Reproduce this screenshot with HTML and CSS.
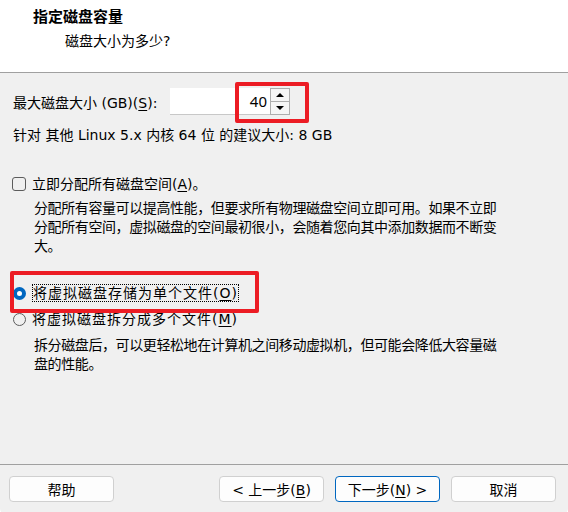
FILE: index.html
```html
<!DOCTYPE html>
<html lang="zh-CN">
<head>
  <meta charset="UTF-8" />
  <meta name="viewport" content="width=device-width, initial-scale=1.0">
  <title>新建虚拟机向导 - 指定磁盘容量</title>
  <link rel="stylesheet" href="styles.css">
</head>
<body>
  <div class="window">
    <!-- 顶部标题区 -->
    <header class="head">
      <div class="title">指定磁盘容量</div>
      <div class="subtitle">磁盘大小为多少?</div>
    </header>

    <main class="content">
      <div class="size-row">
        <label class="size-label">最大磁盘大小 (GB)(<u>S</u>):</label>
        <div class="spin">
          <div class="spin-field">40</div>
          <div class="spin-btns">
            <span class="spin-up"></span>
            <span class="spin-down"></span>
          </div>
        </div>
      </div>
      <p class="hint">针对 其他 Linux 5.x 内核 64 位 的建议大小: 8 GB</p>

      <label class="option">
        <span class="checkbox"></span>
        <span>立即分配所有磁盘空间(<u>A</u>)。</span>
      </label>
      <p class="desc">分配所有容量可以提高性能，但要求所有物理磁盘空间立即可用。如果不立即分配所有空间，虚拟磁盘的空间最初很小，会随着您向其中添加数据而不断变大。</p>

      <label class="option option-first">
        <span class="radio radio-on"></span>
        <span class="radio-text focus">将虚拟磁盘存储为单个文件(<u>O</u>)</span>
      </label>
      <label class="option option-second">
        <span class="radio"></span>
        <span class="radio-text">将虚拟磁盘拆分成多个文件(<u>M</u>)</span>
      </label>
      <p class="desc desc-split">拆分磁盘后，可以更轻松地在计算机之间移动虚拟机，但可能会降低大容量磁盘的性能。</p>

      <!-- 红框标注 -->
      <div class="mark mark-size"></div>
      <div class="mark mark-single"></div>
    </main>

    <footer class="foot">
      <button class="btn">帮助</button>
      <div class="foot-right">
        <button class="btn">&lt; 上一步(<u>B</u>)</button>
        <button class="btn btn-default">下一步(<u>N</u>) &gt;</button>
        <button class="btn">取消</button>
      </div>
    </footer>
  </div>
</body>
</html>
```

FILE: styles.css
```css
* {
  margin: 0;
  padding: 0;
  box-sizing: border-box;
}

body {
  width: 568px;
  height: 512px;
  overflow: hidden;
  background: #fff;
  font-family: "DejaVu Sans", "Noto Sans CJK SC", sans-serif;
  font-size: 14px;
  color: #000;
}

u {
  text-decoration: underline;
  text-underline-offset: 2px;
}

/* 窗口主体 */
.window {
  position: relative;
  height: 516px;
  display: flex;
  flex-direction: column;
  background: #f0f0f0;
  border-radius: 0 0 8px 8px;
}

/* 标题区 */
.head {
  height: 73px;
  background: #fff;
  border-bottom: 1px solid #a0a0a0;
  padding-top: 7px;
}

.title {
  padding-left: 33px;
  font-size: 15px;
  font-weight: bold;
  line-height: 20px;
}

.subtitle {
  padding-left: 65px;
  margin-top: 4px;
  line-height: 20px;
}

.content {
  flex: 1;
  padding-left: 13px;
}

/* 磁盘大小输入 */
.size-row {
  display: flex;
  align-items: center;
  height: 27px;
  margin-top: 15px;
}

.size-label {
  width: 157px;
}

.spin {
  display: flex;
  height: 27px;
}

.spin-field {
  width: 100px;
  background: #fff;
  border-bottom: 1px solid #c8c8c8;
  text-align: right;
  padding-right: 3px;
  font-family: "Noto Sans", sans-serif;
  font-size: 15px;
  line-height: 26px;
}

.spin-btns {
  width: 20px;
  display: flex;
  flex-direction: column;
  border: 1px solid #adadad;
  background: #f5f5f5;
}

.spin-up,
.spin-down {
  flex: 1;
  display: flex;
  align-items: center;
  justify-content: center;
}

.spin-up {
  border-bottom: 1px solid #adadad;
}

.spin-up::after,
.spin-down::after {
  content: "";
  border-left: 4px solid transparent;
  border-right: 4px solid transparent;
}

.spin-up::after {
  border-bottom: 4px solid #000;
}

.spin-down::after {
  border-top: 4px solid #000;
}

.hint {
  margin-top: 10px;
  line-height: 20px;
}

/* 复选框和单选框 */
.option {
  display: flex;
  align-items: center;
  margin-top: 29px;
  margin-left: -1px;
  line-height: 20px;
}

.option-first {
  margin-top: 29px;
}

.option-second {
  margin-top: 7px;
}

.checkbox {
  width: 14px;
  height: 14px;
  border: 1px solid #5c5c5c;
  border-radius: 3px;
  margin-right: 6px;
}

.radio {
  width: 13px;
  height: 13px;
  border: 1px solid #5c5c5c;
  border-radius: 50%;
  margin-right: 6px;
  margin-left: 1px;
}

.radio-on {
  border: 4px solid #0067c0;
  background: #fff;
}

.radio-text {
  letter-spacing: 1px;
}

.focus {
  outline: 1px dotted #000;
  outline-offset: -1px;
  padding: 0 1px;
  line-height: 18px;
}

/* 说明文字，每行 33 个字 */
.desc {
  width: 493px;
  padding-left: 21px;
  margin-top: 4px;
  line-height: 19px;
  font-family: "Noto Sans CJK SC", sans-serif;
  letter-spacing: -0.4px;
}

.desc-split {
  margin-top: 6px;
}

/* 红框标注 */
.mark {
  position: absolute;
  border: 4px solid #ec1c24;
  border-radius: 2px;
}

.mark-size {
  left: 235px;
  top: 82px;
  width: 74px;
  height: 41px;
}

.mark-single {
  left: 10px;
  top: 271px;
  width: 249px;
  height: 42px;
}

/* 底部按钮 */
.foot {
  height: 52px;
  border-top: 1px solid #a0a0a0;
  padding: 11px 12px 0 9px;
  display: flex;
  justify-content: space-between;
  align-items: flex-start;
}

.foot-right {
  display: flex;
  gap: 11px;
}

.btn {
  width: 105px;
  height: 26px;
  font-family: inherit;
  font-size: 14px;
  color: #000;
  background: #fdfdfd;
  border: 1px solid #d0d0d0;
  border-radius: 4px;
}

.btn-default {
  border-color: #0067c0;
}
```
